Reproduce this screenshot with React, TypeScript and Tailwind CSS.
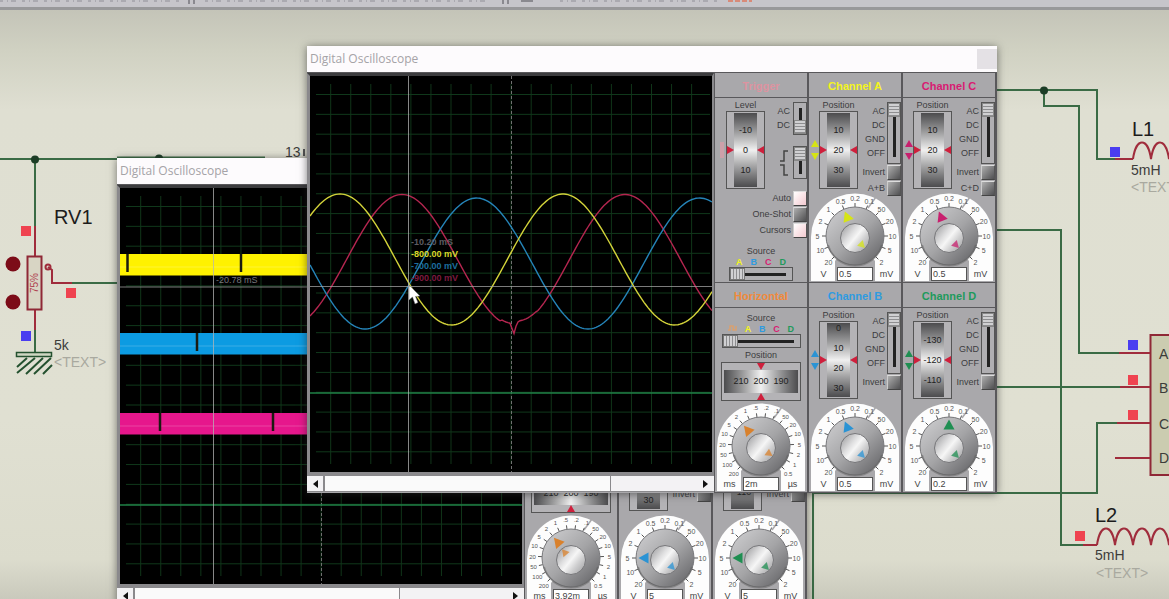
import type { ReactNode } from "react";

type Hue = { text: string; fill: string };

const YELLOW: Hue = { text: "text-[#f4f41c]", fill: "#d6e414" };
const BLUE: Hue = { text: "text-[#2f9be0]", fill: "#2a93d4" };
const PINK: Hue = { text: "text-[#d81b72]", fill: "#c8206e" };
const GREEN: Hue = { text: "text-[#1f9a5c]", fill: "#1f8f52" };
const ORANGE: Hue = { text: "text-[#f08a3c]", fill: "#d9812c" };
const ROSE: Hue = { text: "text-[#dd93a0]", fill: "#e898a4" };

const VOLT_MARKS = ["20", "10", "5", "2", "1", "0.5", "0.2", "0.1", "50", "20", "10", "5", "2"];
const TIME_MARKS = ["200", "100", "50", "20", "10", "5", "2", "1", ".5", ".2", ".1", "50", "20", "10", "5", "2", "1", "0.5"];

const polar = (cx: number, cy: number, r: number, deg: number) => {
  const a = (deg * Math.PI) / 180;
  return { x: cx + r * Math.sin(a), y: cy - r * Math.cos(a) };
};

/* ---------- panel controls ---------- */

function Dial({ id, marks, angle, innerAngle = 135, hue, value, left, right, label }: {
  id: string; marks: string[]; angle: number; innerAngle?: number; hue: Hue; value: string; left: string; right: string; label: string;
}) {
  const step = 270 / (marks.length - 1);
  const dense = marks.length > 13;
  const p = polar(44, 43, 21, angle);
  const q = polar(44, 45, 10, innerAngle);
  return (
    <div className="grid h-[88px] w-[88px]">
      <svg className="[grid-area:1/1]" width="88" height="88" aria-hidden="true">
        <defs>
          <linearGradient id={`${id}-knob`} x1="0.1" y1="0.1" x2="0.9" y2="0.95">
            <stop offset="0" stopColor="#c9c9cb" />
            <stop offset="0.5" stopColor="#a4a4a6" />
            <stop offset="1" stopColor="#67676a" />
          </linearGradient>
          <linearGradient id={`${id}-cap`} x1="0" y1="0.1" x2="1" y2="0.9">
            <stop offset="0" stopColor="#9a9a9c" />
            <stop offset="0.35" stopColor="#dededf" />
            <stop offset="0.5" stopColor="#f6f6f6" />
            <stop offset="0.7" stopColor="#d0d0d1" />
            <stop offset="1" stopColor="#a0a0a2" />
          </linearGradient>
        </defs>
        <path d="M0 88V44A44 43.5 0 0 1 88 44V88Z" fill="#fdfdfd" />
        <path d="M44 43L24 68V88H64V68Z" fill="#a9a8ab" />
        <path d="M57 15L65 4" stroke="#a9a8ab" strokeWidth="1.5" />
        {marks.map((m, i) => {
          const a = -135 + i * step;
          const t = polar(44, 43, dense ? 38.5 : 37.5, a);
          const a1 = polar(44, 43, 29, a);
          const a2 = polar(44, 43, 33, a);
          return (
            <g key={i}>
              <line x1={a1.x} y1={a1.y} x2={a2.x} y2={a2.y} stroke="#555" strokeWidth="1" />
              <text x={t.x} y={t.y + 2.5} textAnchor="middle" fontSize={dense ? 6 : 7} fill="#555">{m}</text>
            </g>
          );
        })}
        <circle cx="44" cy="43" r="29" fill={`url(#${id}-knob)`} stroke="#77777a" strokeWidth="1" />
        <path d="M17 52A28 28 0 0 0 71 52" fill="none" stroke="#5a5a5c" strokeOpacity="0.45" strokeWidth="2" />
        <circle cx="44" cy="45" r="14.5" fill={`url(#${id}-cap)`} stroke="#77777a" strokeWidth="1" />
        <path d="M0 -5.5L5.5 4.5H-5.5Z" fill={hue.fill} transform={`translate(${p.x} ${p.y}) rotate(${angle})`} />
        <path d="M0 -4L4 3H-4Z" fill={hue.fill} fillOpacity="0.75" transform={`translate(${q.x} ${q.y}) rotate(${innerAngle})`} />
      </svg>
      <div className="z-0 flex items-center justify-between self-end text-[9px] leading-[14px] text-[#444] [grid-area:1/1]">
        <span className="w-[25px] text-center">{left}</span>
        <input aria-label={label} defaultValue={value} className="h-[14px] w-[36px] border border-[#555] bg-white px-px text-[9px] leading-[12px] text-[#444] outline-none" />
        <span className="w-[25px] text-center">{right}</span>
      </div>
    </div>
  );
}

function Marker({ dir, color = "#cf1f3c" }: { dir: "left" | "right" | "up" | "down"; color?: string }) {
  const paths = { right: "M0 0L7 4L0 8Z", left: "M7 0L0 4L7 8Z", up: "M0 7L4 0L8 7Z", down: "M0 0L4 7L8 0Z" };
  const flat = dir === "up" || dir === "down";
  return (
    <svg width={flat ? 8 : 7} height={flat ? 7 : 8} className="shrink-0" aria-hidden="true">
      <path d={paths[dir]} fill={color} />
    </svg>
  );
}

function Wheel({ values, shift = false }: { values: string[]; shift?: boolean }) {
  return (
    <div className="flex h-[78px] w-[39px] shrink-0 items-center justify-between border border-[#555] bg-[#b4b3b6]">
      <Marker dir="right" />
      <div className="flex h-[74px] w-[24px] flex-col items-center justify-center overflow-hidden bg-linear-to-b from-[#4c4c4e] via-[#f0f0f0] to-[#4c4c4e]">
        <div className={shift ? "pb-[4px]" : ""}>
          {values.map((v) => (
            <div key={v} className="h-[20px] text-center text-[9px] leading-[20px] text-[#222]">{v}</div>
          ))}
        </div>
      </div>
      <Marker dir="left" />
    </div>
  );
}

function VSwitch({ label, tall, value }: { label: string; tall?: boolean; value: number }) {
  return (
    <input
      type="range" min={0} max={3} defaultValue={value} aria-label={label}
      className={
        "m-0 w-[14px] shrink-0 appearance-none border border-[#555] bg-[#b0afb2] bg-[linear-gradient(#222,#222)] bg-center bg-no-repeat [writing-mode:vertical-lr] [&::-webkit-slider-thumb]:h-[14px] [&::-webkit-slider-thumb]:w-[12px] [&::-webkit-slider-thumb]:appearance-none [&::-webkit-slider-thumb]:border [&::-webkit-slider-thumb]:border-[#888] [&::-webkit-slider-thumb]:bg-[repeating-linear-gradient(#d0d0d2_0_2px,#8e8e90_2px_3px)] " +
        (tall ? "h-[62px] bg-size-[3px_48px]" : "h-[33px] bg-size-[3px_22px]")
      }
    />
  );
}

function HSwitch({ label, wide }: { label: string; wide?: boolean }) {
  return (
    <input
      type="range" min={0} max={4} defaultValue={0} aria-label={label}
      className={
        "m-0 block h-[14px] appearance-none border border-[#555] bg-[#b0afb2] bg-[linear-gradient(#222,#222)] bg-center bg-no-repeat [&::-webkit-slider-thumb]:h-[12px] [&::-webkit-slider-thumb]:w-[15px] [&::-webkit-slider-thumb]:appearance-none [&::-webkit-slider-thumb]:border [&::-webkit-slider-thumb]:border-[#777] [&::-webkit-slider-thumb]:bg-[repeating-linear-gradient(90deg,#d0d0d2_0_2px,#8e8e90_2px_3px)] " +
        (wide ? "w-[79px] bg-size-[66px_3px]" : "w-[64px] bg-size-[50px_3px]")
      }
    />
  );
}

function Toggle({ label, on = false }: { label: string; on?: boolean }) {
  return (
    <label className="flex h-[16px] items-center justify-end gap-[2px] text-[9px] leading-[16px]">
      <span>{label}</span>
      <input
        type="checkbox" defaultChecked={on}
        className="m-0 h-[15px] w-[14px] shrink-0 appearance-none border border-t-[#ddd] border-r-[#555] border-b-[#444] border-l-[#ccc] bg-linear-to-br from-[#b0b0b0] to-[#505052] checked:from-white checked:to-[#f3c9d0]"
      />
    </label>
  );
}

function Section({ title, hue, children }: { title: string; hue: Hue; children: ReactNode }) {
  return (
    <section className="flex h-[210px] flex-col border-r-2 border-b border-[#59585b] bg-[#a9a8ab] text-[#3c3c3e]">
      <h2 className={`h-[25px] border-b border-[#59585b] text-center text-[11px] leading-[26px] font-bold ${hue.text}`}>{title}</h2>
      {children}
    </section>
  );
}

function ChannelSection({ id, name, hue, values, shift, sum, angle, value }: {
  id: string; name: string; hue: Hue; values: string[]; shift?: boolean; sum?: string; angle: number; value: string;
}) {
  return (
    <Section title={`Channel ${name}`} hue={hue}>
      <div className="flex h-[95px] justify-between">
        <div className="flex flex-col pt-px pl-[2px]">
          <div className="pl-[8px] text-center text-[9px] leading-[12px]">Position</div>
          <div className="flex items-center">
            <div className="flex w-[8px] flex-col items-center gap-[6px]">
              <Marker dir="up" color={hue.fill} />
              <Marker dir="down" color={hue.fill} />
            </div>
            <Wheel values={values} shift={shift} />
          </div>
        </div>
        <div className="-ml-2 flex flex-col pt-[4px]">
          <div className="flex justify-end gap-[2px]">
            <ul className="pt-[2px] text-right text-[9px] leading-[14px]">
              <li>AC</li><li>DC</li><li>GND</li><li>OFF</li>
            </ul>
            <VSwitch tall value={0} label={`Channel ${name} coupling`} />
          </div>
          <Toggle label="Invert" />
          {sum && <Toggle label={sum} />}
        </div>
      </div>
      <div className="flex justify-center">
        <Dial id={`${id}-${name}`} marks={VOLT_MARKS} angle={angle} hue={hue} value={value} left="V" right="mV" label={`Channel ${name} volts per division`} />
      </div>
    </Section>
  );
}

function SourceLetters({ wide }: { wide?: boolean }) {
  return (
    <div className={"flex justify-between text-[9px] leading-[10px] font-bold " + (wide ? "w-[66px]" : "w-[50px]")}>
      {wide && (
        <svg width="9" height="8" aria-hidden="true"><path d="M0 6H2V2H5V6H8V2" fill="none" stroke="#d9a070" strokeWidth="1.5" /></svg>
      )}
      <span className={YELLOW.text}>A</span>
      <span className={BLUE.text}>B</span>
      <span className={PINK.text}>C</span>
      <span className={GREEN.text}>D</span>
    </div>
  );
}

function TriggerSection() {
  return (
    <Section title="Trigger" hue={ROSE}>
      <div className="flex justify-between">
        <div className="pt-px pl-[3px]">
          <div className="pl-[8px] text-center text-[9px] leading-[12px]">Level</div>
          <div className="flex items-center">
            <div className="flex w-[8px] justify-center"><span className="h-[16px] w-[4px] bg-[#cda0a9]" /></div>
            <Wheel values={["-10", "0", "10"]} />
          </div>
        </div>
        <div className="flex flex-col items-end gap-[11px] pt-[4px]">
          <div className="flex gap-[3px]">
            <ul className="pt-[2px] text-right text-[9px] leading-[14px]"><li>AC</li><li>DC</li></ul>
            <VSwitch value={3} label="Trigger coupling" />
          </div>
          <div className="flex items-center gap-[5px]">
            <svg width="8" height="28" aria-hidden="true">
              <path d="M0 12H4V2H8M0 16H4V26H8" fill="none" stroke="#444" strokeWidth="1.5" />
            </svg>
            <VSwitch value={0} label="Trigger slope" />
          </div>
        </div>
      </div>
      <div className="pt-px">
        <Toggle label="Auto" on />
        <Toggle label="One-Shot" />
        <Toggle label="Cursors" on />
      </div>
      <div className="mt-auto flex flex-col items-center pb-px">
        <div className="text-[9px] leading-[12px]">Source</div>
        <SourceLetters />
        <HSwitch label="Trigger source" />
      </div>
    </Section>
  );
}

function HorizontalSection({ id, value, angle, innerAngle }: { id: string; value: string; angle: number; innerAngle: number }) {
  return (
    <Section title="Horizontal" hue={ORANGE}>
      <div className="flex h-[95px] flex-col items-center pt-[5px]">
        <div className="text-[9px] leading-[11px]">Source</div>
        <SourceLetters wide />
        <HSwitch wide label="Horizontal source" />
        <div className="text-[9px] leading-[14px]">Position</div>
        <div className="flex h-[39px] w-[80px] shrink-0 flex-col items-center justify-between border border-[#555] bg-[#b4b3b6]">
          <Marker dir="down" />
          <div className="grid h-[23px] w-[74px] grid-cols-[20px_20px_20px] justify-center bg-linear-to-r from-[#4c4c4e] via-[#f0f0f0] to-[#4c4c4e] text-center text-[9px] leading-[23px] text-[#222]">
            <span>210</span><span>200</span><span>190</span>
          </div>
          <Marker dir="up" />
        </div>
      </div>
      <div className="flex justify-center">
        <Dial id={`${id}-time`} marks={TIME_MARKS} angle={angle} innerAngle={innerAngle} hue={ORANGE} value={value} left="ms" right="µs" label="Time per division" />
      </div>
    </Section>
  );
}

/* ---------- traces ---------- */

function Graticule({ cursorX, cursorY, children }: { cursorX: number; cursorY: number; children: ReactNode }) {
  return (
    <svg width="402" height="396" className="block bg-black" role="img" aria-label="Scope traces">
      {Array.from({ length: 19 }, (_, i) => (
        <line key={`v${i}`} x1={20.7 + i * 20.05} x2={20.7 + i * 20.05} y1="8" y2="388" stroke="#103519" strokeWidth="1" />
      ))}
      {Array.from({ length: 19 }, (_, i) => (
        <line key={`h${i}`} y1={18.5 + i * 19.85} y2={18.5 + i * 19.85} x1="6" x2="400" stroke="#10381b" strokeWidth="1" />
      ))}
      <line x1="201.5" x2="201.5" y1="0" y2="396" stroke="#707070" strokeDasharray="3 2" />
      <line x1="0" x2="402" y1="317" y2="317" stroke="#1f8046" strokeWidth="1.5" />
      {children}
      <line x1={cursorX} x2={cursorX} y1="0" y2="396" stroke="#b4b4b4" strokeOpacity="0.75" />
      <line y1={cursorY} y2={cursorY} x1="0" x2="402" stroke="#a4a4a4" strokeOpacity="0.75" />
    </svg>
  );
}

const wave = (peak: number, mid: number, amp: number, dip?: number) => {
  const pts: string[] = [];
  for (let x = 0; x <= 402; x += 2) {
    let y = mid - amp * Math.cos(((x - peak) * 2 * Math.PI) / 223);
    if (dip) {
      const d = x - dip;
      if (d >= -12 && d < -4) y -= 2;
      else if (d >= -4 && d <= 0) y += 8 + d * 2.5;
      else if (d > 0 && d <= 4) y += 5 - d * 2;
      else if (d > 4 && d < 24) y -= 4 - (d - 4) / 6;
    }
    pts.push(`${x},${y.toFixed(1)}`);
  }
  return pts.join(" ");
};

function SineTraces() {
  return (
    <Graticule cursorX={98.5} cursorY={210.5}>
      <polyline points={wave(92, 184, 65.5, 204)} fill="none" stroke="#b52650" strokeWidth="1.4" />
      <polyline points={wave(166.5, 187.5, 65.5)} fill="none" stroke="#2584b8" strokeWidth="1.4" />
      <polyline points={wave(30, 183.5, 65.5)} fill="none" stroke="#d3d33a" strokeWidth="1.4" />
      <g fontSize="9" fontWeight="bold">
        <text x="101" y="169" fill="#5c5c62">-10.20 mS</text>
        <text x="101" y="181" fill="#d8d82a">-800.00 mV</text>
        <text x="101" y="193" fill="#1c6f9f">-700.00 mV</text>
        <text x="101" y="205" fill="#7c1a3f">-900.00 mV</text>
      </g>
      <path d="M99 209V224L102.500 221L105 228L108 226.500L105.500 220.500L110 220Z" fill="#fff" stroke="#666" strokeWidth="0.5" />
    </Graticule>
  );
}

function BandTraces() {
  const bands = [
    { y: 66, fill: "#fff200", ticks: [7.5, 121] },
    { y: 145, fill: "#0c9be2", ticks: [77] },
    { y: 225, fill: "#e6178c", ticks: [40, 153] },
  ];
  return (
    <Graticule cursorX={93.5} cursorY={99}>
      {bands.map((b) => (
        <g key={b.y}>
          <rect x="0" y={b.y} width="402" height="21.500" fill={b.fill} />
          <line x1="0" x2="402" y1={b.y + 13} y2={b.y + 13} stroke="#fff" strokeOpacity="0.2" />
          {b.ticks.map((t) => <line key={t} x1={t} x2={t} y1={b.y} y2={b.y + 18} stroke="#1a1a10" strokeWidth="2.500" />)}
        </g>
      ))}
      <text x="96" y="95" fontSize="9" fill="#77777c">-20.78 mS</text>
    </Graticule>
  );
}

/* ---------- instrument window ---------- */

type Setting = { angle: number; value: string };

function ScopeWindow({ id, traces, volts, time, thumb }: {
  id: string; traces: ReactNode; volts: Setting[]; time: Setting & { innerAngle: number }; thumb: "long" | "short";
}) {
  return (
    <article className="w-[690px] bg-[#a9a8ab] shadow-[0_1px_8px_rgba(40,40,40,0.6)]">
      <header className="flex h-[26px] items-center justify-between bg-[#fdfbfd] pl-[3px]">
        <h1 className="text-[12px] leading-[26px] text-[#a5a3a7] [font-family:'Open_Sans','Noto_Sans',sans-serif]">Digital Oscilloscope</h1>
        <button aria-label="Close" className="mt-[3px] h-[20px] w-[20px] self-start bg-[#e4e1e5]" />
      </header>
      <div className="flex border-t border-[#59585b]">
        <div className="flex flex-col border-r border-[#59585b]">
          <div className="border-3 border-r-2 border-[#8a898c] border-t-[#3c3c3e]">{traces}</div>
          <div className="flex h-[17px] bg-[#8a898c] py-px">
            <button aria-label="Scroll left" className="flex w-[16px] items-center justify-center bg-[#f3f2f4]">
              <svg width="5" height="8" aria-hidden="true"><path d="M5 0V8L0 4Z" fill="#111" /></svg>
            </button>
            <div className={"ml-[2px] bg-[#fafafa] " + (thumb === "long" ? "w-[285px]" : "w-[264px]")} />
            <button aria-label="Scroll right" className="ml-px flex flex-1 items-center justify-end bg-[#f3f2f4] pr-[6px]">
              <svg width="5" height="8" aria-hidden="true"><path d="M0 0V8L5 4Z" fill="#111" /></svg>
            </button>
          </div>
        </div>
        <div className="grid flex-1 grid-cols-3">
          <TriggerSection />
          <ChannelSection id={id} name="A" hue={YELLOW} values={["10", "20", "30"]} sum="A+B" {...volts[0]} />
          <ChannelSection id={id} name="C" hue={PINK} values={["10", "20", "30"]} sum="C+D" {...volts[1]} />
          <HorizontalSection id={id} {...time} />
          <ChannelSection id={id} name="B" hue={BLUE} values={["0", "10", "20", "30"]} shift {...volts[2]} />
          <ChannelSection id={id} name="D" hue={GREEN} values={["-130", "-120", "-110"]} {...volts[3]} />
        </div>
      </div>
    </article>
  );
}

/* ---------- circuit sheet ---------- */

const coil = (x: number, y: number, turns: number) => {
  let d = `M${x} ${y}`;
  for (let i = 0; i < turns; i++) d += ` C${x + i * 18 + 3} ${y - 22} ${x + i * 18 + 15} ${y - 22} ${x + i * 18 + 18} ${y}`;
  return d;
};

function Schematic() {
  const squares: [number, number, string][] = [
    [21, 226, "#ef4350"], [66, 288, "#ef4350"], [21, 331, "#4a3df0"],
    [1110, 147, "#4a3df0"], [1128, 340, "#4a3df0"], [1128, 375, "#ef4350"], [1128, 410, "#ef4350"], [1075, 531, "#ef4350"],
  ];
  return (
    <svg className="absolute inset-0 h-full w-full" role="img" aria-label="Circuit schematic">
      <g fill="none" stroke="#3a6b45" strokeWidth="2">
        <path d="M0 159H117M117 157.500H265M35 159V226M35 328V352M72 283H117" />
        <path d="M997 90H1097V159H1115M1044 90V106H1079V353H1119M997 230H1061V545H1083M997 387H1120M813 599V493H1097V423H1117" />
      </g>
      <g fill="#1c3d26"><circle cx="35" cy="159.500" r="4" /><circle cx="159" cy="158.500" r="4" /><circle cx="1044" cy="90.500" r="4" /></g>
      <rect x="1150.500" y="335" width="30" height="140" fill="#cbccb0" stroke="#8f2836" strokeWidth="2" />
      <g fill="none" stroke="#a02c3c" strokeWidth="2">
        <path d="M35 226V256M35 310V330M48 267L52 270V283H72" />
        <circle cx="48" cy="267" r="2.500" />
        <path d="M1115 159H1133M1119 353H1150M1120 387H1150M1117 423H1150M1115 458H1150M1083 545H1097" />
        <path d={coil(1133, 159, 3)} />
        <path d={coil(1097, 545, 5)} />
      </g>
      <rect x="27.500" y="256.500" width="14" height="53" fill="#d8d5c4" stroke="#8f2836" strokeWidth="2" />
      <text x="0" y="0" fontSize="10" fill="#b04452" textAnchor="middle" transform="translate(38 283) rotate(-90)">75%</text>
      <g fill="#7c0c18"><circle cx="13" cy="264" r="7.500" /><circle cx="13" cy="302" r="7.500" /></g>
      <rect x="16.500" y="352.500" width="35" height="4" fill="#cfd6c2" stroke="#24512f" strokeWidth="1.500" />
      <path d="M27 358L17 367M35 358L17 373M43 358L26 374M51 358L34 374M52 365L43 374" stroke="#24512f" strokeWidth="2" />
      {squares.map(([x, y, c]) => <rect key={`${x}-${y}`} x={x} y={y} width="10" height="10" fill={c} />)}
      <g fontSize="20" fill="#1c1c1c">
        <text x="54" y="224">RV1</text><text x="1132" y="136">L1</text><text x="1095" y="522">L2</text>
      </g>
      <g fontSize="14" fill="#3c3c3a">
        <text x="54" y="350">5k</text><text x="1131" y="175">5mH</text><text x="1095" y="560">5mH</text>
        <text x="285" y="157">13</text>
        <text x="1159" y="359">A</text><text x="1159" y="393">B</text><text x="1159" y="429">C</text><text x="1159" y="463">D</text>
      </g>
      <path d="M304 149V156" stroke="#555" strokeWidth="2" />
      <g fontSize="14" fill="#a9a99f">
        <text x="54" y="367">&lt;TEXT&gt;</text><text x="1131" y="192">&lt;TEXT&gt;</text><text x="1096" y="578">&lt;TEXT&gt;</text>
      </g>
    </svg>
  );
}

export default function App() {
  return (
    <main className="relative flex h-screen flex-col overflow-hidden bg-[linear-gradient(#c4c4b8_10px,#d0d1c2_50px,#dfdfd2_110px,#e0e0d2_420px,#dcdccd_560px,#c9c9bc)] [font-family:'Liberation_Sans',Arial,sans-serif]">
      <div className="h-[10px] shrink-0 border-b-[3px] border-[#98989a] bg-[#c6c5ca]">
        <svg width="100%" height="7" className="block" aria-hidden="true">
          <path d="M0 1H180M205 1H490M560 1H720" stroke="#8f8e96" strokeDasharray="3 4 1 3 5 6" />
          <path d="M189 0V4M194 0V4M503 0V4M508 0V4M521 1H533" stroke="#77767c" strokeWidth="1.500" />
          <path d="M728 1H752" stroke="#d88a78" strokeWidth="2" strokeDasharray="5 2" />
        </svg>
      </div>
      <Schematic />
      <div className="absolute top-[158px] left-[117px]">
        <ScopeWindow
          id="rear" traces={<BandTraces />} thumb="short"
          volts={[{ angle: -90, value: "5" }, { angle: -90, value: "5" }, { angle: -90, value: "5" }, { angle: -90, value: "5" }]}
          time={{ angle: -40, innerAngle: -40, value: "3.92m" }}
        />
      </div>
      <div className="absolute top-[46px] left-[307px]">
        <ScopeWindow
          id="front" traces={<SineTraces />} thumb="long"
          volts={[{ angle: -22.5, value: "0.5" }, { angle: -22.5, value: "0.5" }, { angle: -22.5, value: "0.5" }, { angle: 0, value: "0.2" }]}
          time={{ angle: -40, innerAngle: 125, value: "2m" }}
        />
      </div>
    </main>
  );
}
